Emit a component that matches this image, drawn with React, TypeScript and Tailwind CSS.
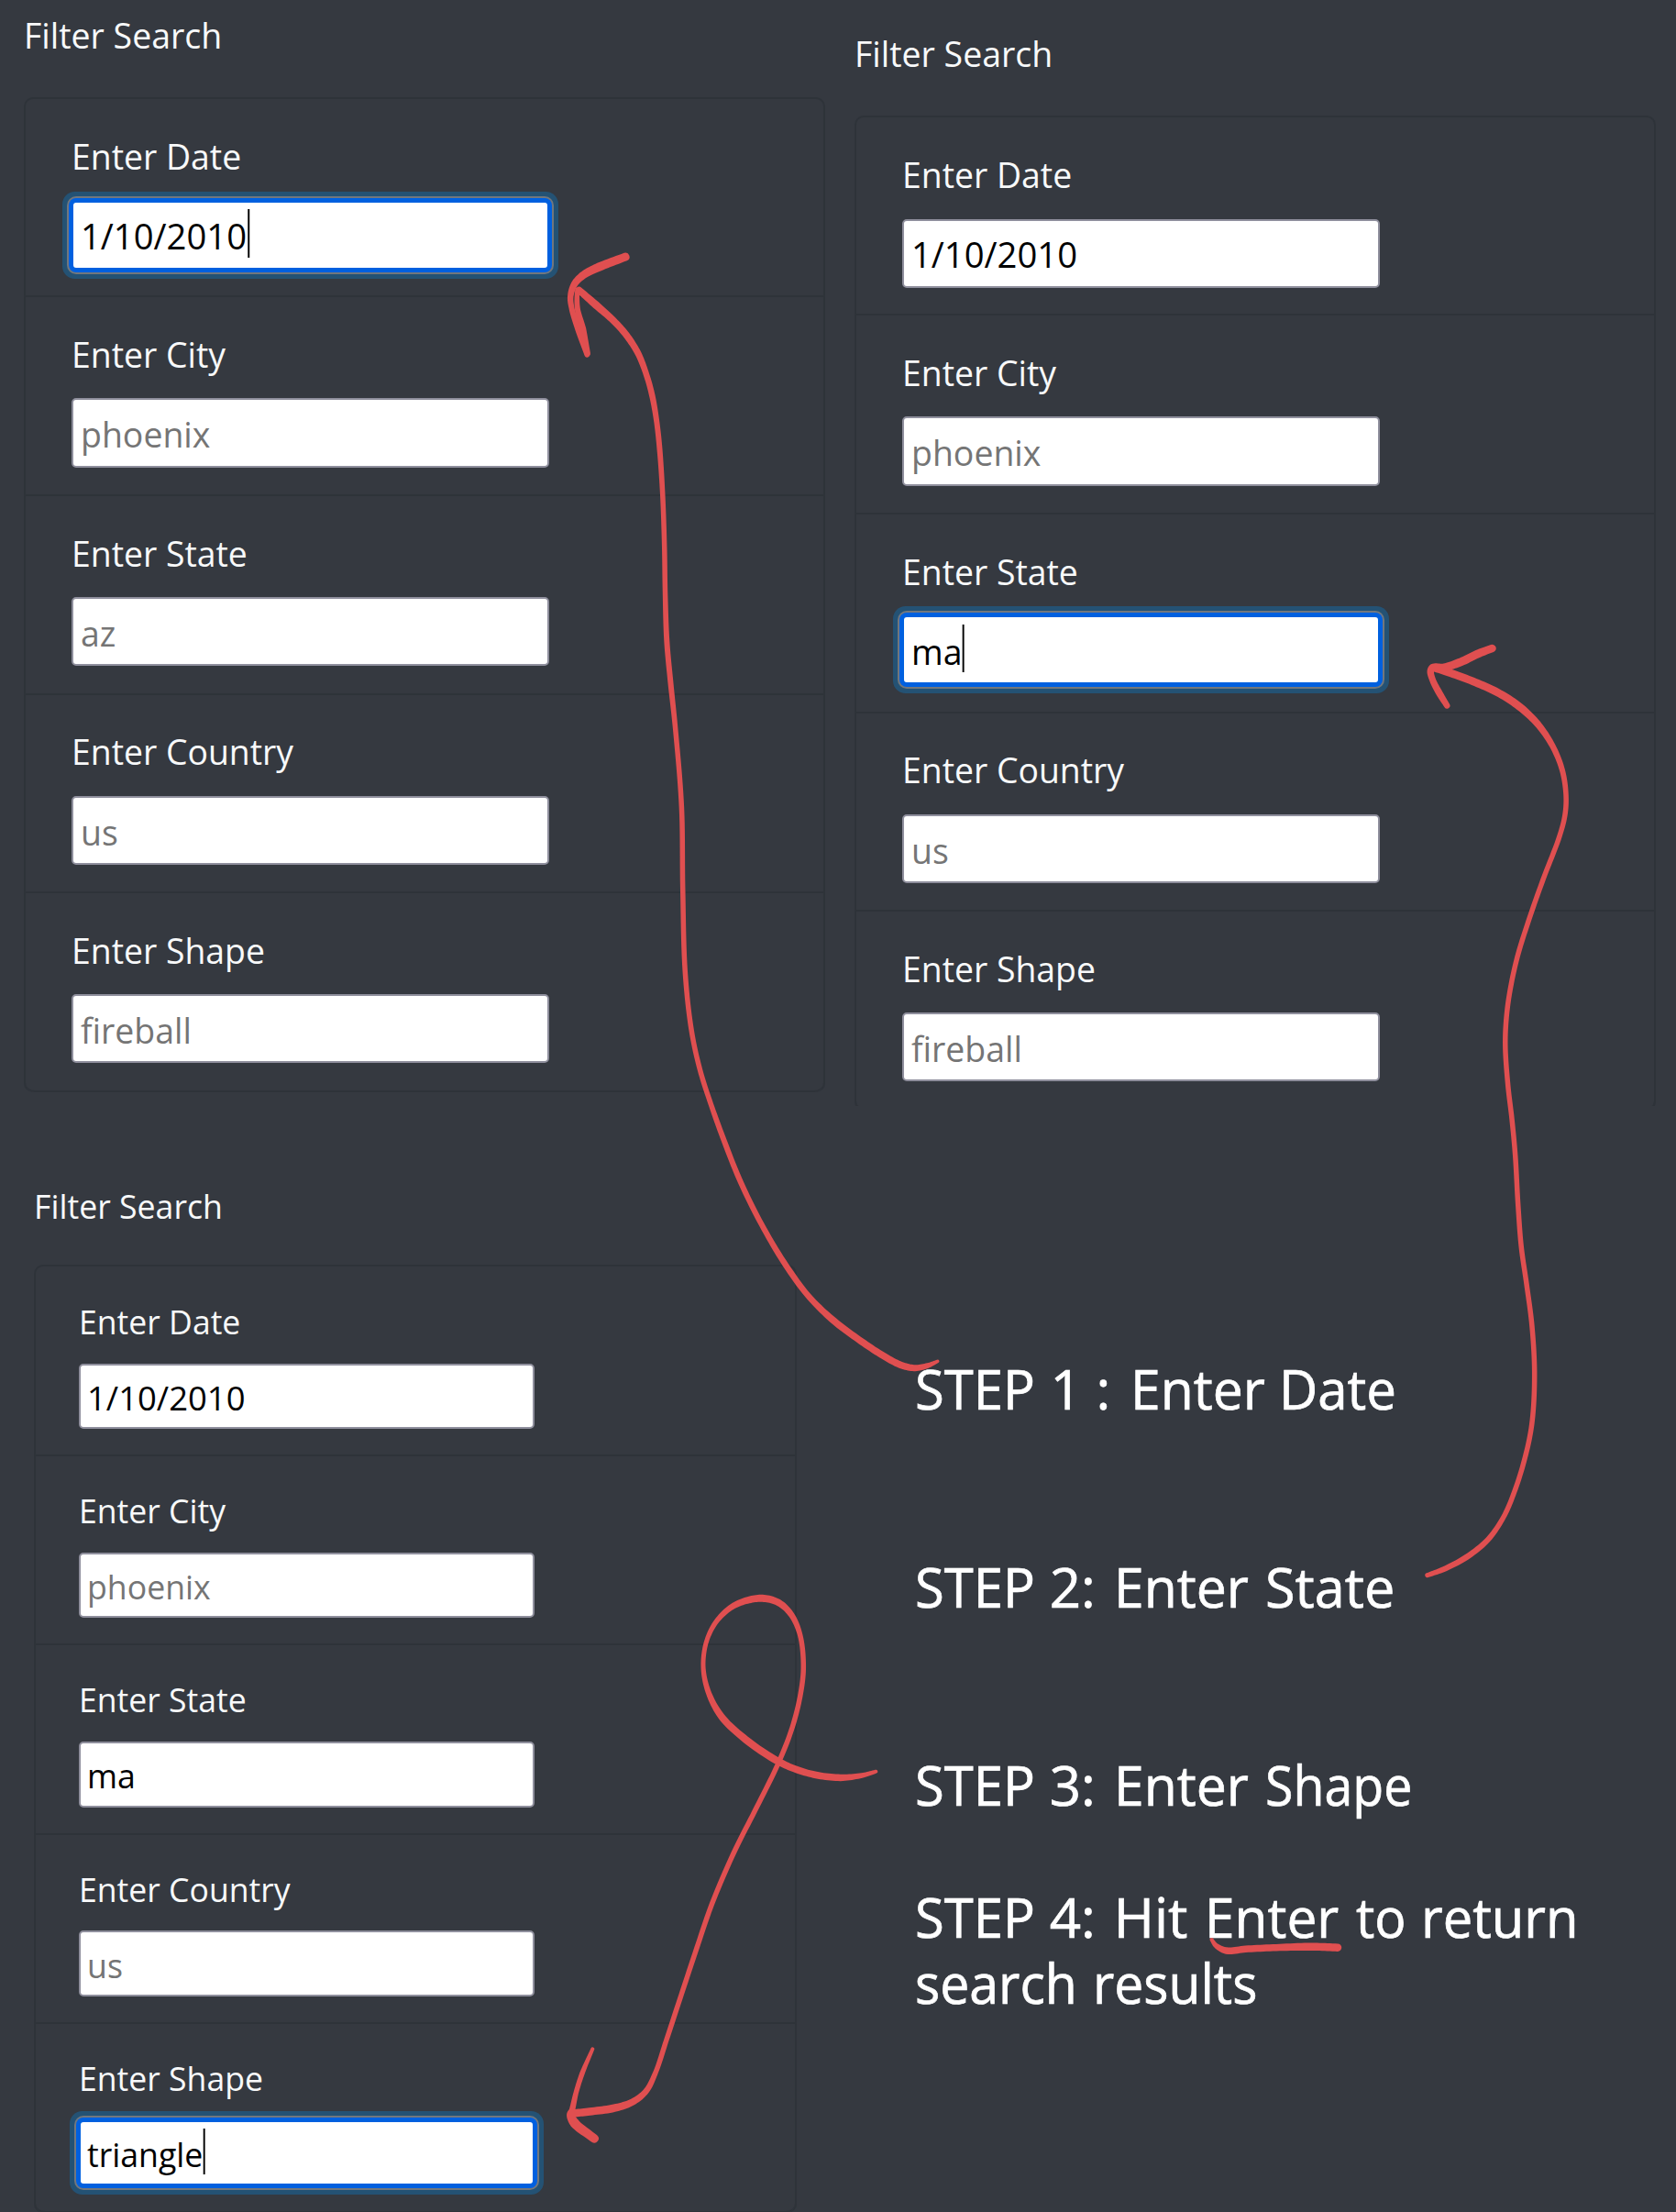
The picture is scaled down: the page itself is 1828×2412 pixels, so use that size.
import React from "react";

type Field = { label: string; hint: string; value?: string; focused?: boolean };

const fields = (values: Record<string, string>, focused: string): Field[] =>
  [
    { label: "Enter Date", hint: "" },
    { label: "Enter City", hint: "phoenix" },
    { label: "Enter State", hint: "az" },
    { label: "Enter Country", hint: "us" },
    { label: "Enter Shape", hint: "fireball" },
  ].map((f) => ({ ...f, value: values[f.label], focused: f.label === focused }));

function FieldBox({ hint, value, focused }: Field) {
  const numeric = !!value && /^\d/.test(value);
  return (
    <div
      className={
        "flex h-[1.925em] w-[13.36em] shrink-0 items-center rounded-[5px] border-2 bg-white pl-[0.195em] pt-[0.07em] " +
        (focused
          ? "border-[#0060df] shadow-[0_0_0_3px_#0060df,0_0_0_5px_#72777d,0_0_0_10px_#245274]"
          : "border-[#8f8f9d]")
      }
    >
      <span
        className={
          "relative inline-block origin-left whitespace-nowrap leading-[1.538em] " +
          (numeric ? "scale-x-[0.98] " : "scale-x-[0.96] ") +
          (value ? "text-black" : "text-[#757575]")
        }
      >
        {value ?? hint}
        {focused && (
          <span
            className={
              "absolute top-[0.02em] h-[1.35em] w-[2px] bg-black " +
              (numeric ? "left-[calc(100%+1px)]" : "left-full")
            }
          />
        )}
      </span>
    </div>
  );
}

function FilterPanel({ className, items }: { className: string; items: Field[] }) {
  return (
    <section className={"shrink-0 text-[#f8f9fa] " + className}>
      <h2 className="leading-[1.538em]">
        <span className="inline-block origin-left scale-x-[0.96]">Filter Search</span>
      </h2>
      <ul className="mt-[0.985em] w-[22.41em] rounded-[10px] border-2 border-b-0 border-[#2e3339]">
        {items.map((f, i) => (
          <li
            key={f.label}
            className={
              "flex h-[5.554em] flex-col border-b-2 border-[#2e3339] pl-[1.282em] " +
              (i === 0 ? "pt-[0.825em] " : "pt-[0.808em] ") +
              (i === items.length - 1 ? "rounded-b-[10px]" : "")
            }
          >
            <label className="mb-[0.475em] h-[1.538em] leading-[1.538em]">
              <span className="inline-block origin-left scale-x-[0.958]">{f.label}</span>
            </label>
            <FieldBox {...f} />
          </li>
        ))}
      </ul>
    </section>
  );
}

/* Each word: text, classes for its advance and horizontal stretch. */
type Word = [string, string];

function Line({ words }: { words: Word[] }) {
  return (
    <p className="flex h-[72px] whitespace-pre leading-[72px]">
      {words.map(([t, c], i) => (
        <span key={i} className={"block shrink-0 origin-left " + c}>
          {t}
        </span>
      ))}
    </p>
  );
}

/* Brush strokes: x, y, thickness triples joined by a smooth spline. */
const STROKES: number[][] = [
  [
    1022.7, 1484.3, 3, 1013.3, 1488.5, 5, 998.3, 1491.7, 6.5, 983.3, 1488.7, 7, 963.3, 1478.3, 7, 936.7, 1460.7, 7,
    910, 1440.7, 7, 883.3, 1415, 6, 860, 1384, 6, 833.3, 1340, 5.5, 808.3, 1290, 5.5, 788.3, 1240, 5.5, 774, 1200, 5,
    763.6, 1167, 5, 754.3, 1124.3, 5, 747.3, 1060, 5, 744.7, 969, 5, 743.4, 880, 5, 736.7, 795, 5,
    731.5, 745, 5.5, 727.3, 699, 5.5, 725.5, 645.7, 5, 724.7, 596, 5, 722.7, 538.5, 5, 719.4, 488.7, 5.5, 716, 458, 5.5,
    711.3, 431.3, 6, 705, 408.4, 6, 696, 385.4, 6.5, 683.3, 365.5, 7, 669, 349.5, 7, 650, 332.5, 8, 631.7, 316.5, 7,
  ],
  [630, 316, 5, 629.3, 324, 5, 630, 337.6, 5.5, 635, 358.6, 8, 640.7, 385.4, 6],
  [
    640.3, 387, 5, 631.5, 362, 6, 623.5, 336, 5.5, 622.3, 323, 6, 626.7, 309.5, 7, 636.7, 299.6, 8, 653.3, 291.2, 9,
    682.3, 280, 8.5,
  ],
  [
    1556.7, 1717.7, 4.5, 1574.4, 1711.2, 5.5, 1599.4, 1698, 6, 1623, 1678.7, 5.5, 1640, 1654, 5, 1650.5, 1630, 5,
    1662.3, 1593.3, 5, 1670.7, 1553.3, 5, 1673.7, 1500, 5, 1671, 1446.7, 5, 1665, 1400, 5, 1659.3, 1360, 5,
    1655.7, 1313.3, 5, 1652.7, 1260, 5, 1649, 1220, 5, 1644.7, 1183.3, 5, 1641.8, 1140, 5,
    1643, 1110, 5, 1647, 1080, 5, 1655, 1043.3, 5, 1668, 1001.7, 5, 1683.3, 958.3, 5, 1701, 911.7, 5,
    1707, 888, 5, 1708, 866.7, 5, 1704, 840, 5.5, 1693.3, 813.3, 6, 1677, 789.3, 7, 1657, 770.3, 8,
    1633.3, 755, 8, 1606.7, 743, 8, 1580, 733.3, 8, 1565, 729.3, 6,
  ],
  [
    1627.5, 707, 8, 1613.3, 712.3, 8.5, 1593.3, 721.8, 8.5, 1575, 727.7, 8, 1562.5, 727.7, 7, 1560.3, 732, 7,
    1562.7, 741.7, 6.5, 1570, 756, 7, 1578.3, 769.5, 6,
  ],
  [
    955.3, 1931.7, 3.5, 940, 1936, 5, 916.7, 1938.4, 7, 890, 1935.5, 7, 866.7, 1928.8, 7, 846.7, 1919.5, 7.5,
    813.3, 1896.8, 7.5, 786.7, 1871.5, 7, 772.3, 1844.2, 5.5, 767, 1816.8, 4.5, 770.7, 1789.4, 4.5, 781.7, 1767.6, 5,
    798.5, 1752, 6, 816.7, 1744.6, 7, 833.3, 1742.9, 7.5, 850, 1748, 7, 863.3, 1761, 6, 872.7, 1783, 5,
    876.3, 1816.8, 5, 873.3, 1846.3, 5, 864, 1884, 5, 848.3, 1924, 5, 826, 1969.3, 5, 800, 2021, 5, 776.7, 2075.6, 5,
    760, 2124, 5, 743.3, 2174.5, 5, 726.7, 2225, 5, 715.5, 2258.7, 5, 705, 2279.8, 6, 690, 2292, 7, 670, 2298.7, 8,
    643.3, 2302.5, 8, 623.3, 2304.6, 8,
  ],
  [
    646.3, 2234.3, 3.5, 635, 2260.8, 5, 628.3, 2281.9, 5, 624, 2300.8, 6, 622.3, 2305.9, 8, 626.7, 2315, 10,
    648.3, 2332, 9,
  ],
  [
    1321.5, 2115, 3.5, 1326.5, 2121.7, 5, 1337.5, 2127, 7, 1358.6, 2125.3, 7, 1391.8, 2123.7, 7, 1430.5, 2122.7, 8,
    1459, 2123.7, 8,
  ],
];

function outline(flat: number[]): string {
  const pts: number[][] = [];
  for (let i = 0; i < flat.length; i += 3) pts.push(flat.slice(i, i + 3));
  const samples: number[][] = [];
  const steps = 10;
  for (let i = 0; i < pts.length - 1; i++) {
    const p0 = pts[Math.max(0, i - 1)];
    const p1 = pts[i];
    const p2 = pts[i + 1];
    const p3 = pts[Math.min(pts.length - 1, i + 2)];
    // Centripetal parameterisation keeps unevenly spaced points free of bumps.
    const gap = (a: number[], b: number[]) => Math.max(1e-3, Math.sqrt(Math.hypot(a[0] - b[0], a[1] - b[1])));
    const d1 = gap(p0, p1);
    const d2 = gap(p1, p2);
    const d3 = gap(p2, p3);
    for (let s = 0; s < steps || (i === pts.length - 2 && s === steps); s++) {
      const t = s / steps;
      samples.push(
        [0, 1, 2].map((k) => {
          if (k === 2) return p1[2] + (p2[2] - p1[2]) * t + 0.5;
          const end = p2[k] - p1[k];
          const m1 =
            i === 0 ? end : end + d2 * ((p1[k] - p0[k]) / d1 - (p2[k] - p0[k]) / (d1 + d2));
          const m2 =
            i === pts.length - 2 ? end : end + d2 * ((p3[k] - p2[k]) / d3 - (p3[k] - p1[k]) / (d2 + d3));
          const t2 = t * t;
          const t3 = t2 * t;
          return (2 * t3 - 3 * t2 + 1) * p1[k] + (t3 - 2 * t2 + t) * m1 + (-2 * t3 + 3 * t2) * p2[k] + (t3 - t2) * m2;
        }),
      );
    }
  }
  const left: string[] = [];
  const right: string[] = [];
  samples.forEach((p, i) => {
    const a = samples[Math.max(0, i - 1)];
    const b = samples[Math.min(samples.length - 1, i + 1)];
    const len = Math.hypot(b[0] - a[0], b[1] - a[1]) || 1;
    const nx = (-(b[1] - a[1]) / len) * (p[2] / 2);
    const ny = ((b[0] - a[0]) / len) * (p[2] / 2);
    left.push((p[0] + nx).toFixed(2) + " " + (p[1] + ny).toFixed(2));
    right.push((p[0] - nx).toFixed(2) + " " + (p[1] - ny).toFixed(2));
  });
  const r0 = samples[0][2] / 2;
  const r1 = samples[samples.length - 1][2] / 2;
  right.reverse();
  return `M${left.join("L")}A${r1} ${r1} 0 0 0 ${right[0]}L${right.join("L")}A${r0} ${r0} 0 0 0 ${left[0]}Z`;
}

export default function App() {
  return (
    <main className="relative flex h-[2412px] w-[1828px] flex-col overflow-hidden bg-[#353940] font-['Open_Sans',sans-serif]">
      <div className="flex h-[1206px] shrink-0 overflow-hidden">
        <FilterPanel
          className="w-[906px] pl-[26px] pt-[7.5px] text-[39px]"
          items={fields({ "Enter Date": "1/10/2010" }, "Enter Date")}
        />
        <FilterPanel
          className="w-[896px] pl-[26px] pt-[27.5px] text-[39px]"
          items={fields({ "Enter Date": "1/10/2010", "Enter State": "ma" }, "Enter State")}
        />
      </div>
      <div className="flex h-[1206px] shrink-0 overflow-hidden">
        <FilterPanel
          className="w-[998px] pl-[36.5px] pt-[79.5px] text-[37.17px]"
          items={fields({ "Enter Date": "1/10/2010", "Enter State": "ma", "Enter Shape": "triangle" }, "Enter Shape")}
        />
        <div className="flex flex-1 flex-col pt-[272px] text-[60px] text-white [-webkit-text-stroke:0.7px_white]">
          <Line
            words={[
              ["STEP", "w-[147.6px] scale-x-[0.967]"],
              ["1", "w-[50px]"],
              [":", "w-[37px]"],
              ["Enter", "w-[162.5px] scale-x-[0.98]"],
              ["Date", "scale-x-[0.97]"],
            ]}
          />
          <div className="mt-36">
            <Line
              words={[
                ["STEP", "w-[146.7px] scale-x-[0.967]"],
                ["2:", "w-[70px]"],
                ["Enter", "w-[165.1px] scale-x-[0.98]"],
                ["State", "scale-x-[0.99]"],
              ]}
            />
          </div>
          <div className="mt-36">
            <Line
              words={[
                ["STEP", "w-[146.7px] scale-x-[0.967]"],
                ["3:", "w-[70px]"],
                ["Enter", "w-[165.1px] scale-x-[0.98]"],
                ["Shape", "scale-x-[0.925]"],
              ]}
            />
          </div>
          <div className="mt-[72px]">
            <Line
              words={[
                ["STEP", "w-[146.7px] scale-x-[0.967]"],
                ["4:", "w-[70px]"],
                ["Hit", "w-[99px]"],
                ["Enter", "w-[165.3px] scale-x-[0.977]"],
                ["to", "w-[71px] scale-x-[0.95]"],
                ["return", "scale-x-[0.965]"],
              ]}
            />
            <Line
              words={[
                ["search", "w-[193.5px] scale-x-[0.952]"],
                ["results", "scale-x-[0.95]"],
              ]}
            />
          </div>
        </div>
      </div>
      <svg
        className="pointer-events-none absolute inset-0"
        width="1828"
        height="2412"
        viewBox="0 0 1828 2412"
        fill="#e04f50"
      >
        {STROKES.map((s, i) => (
          <path key={i} d={outline(s)} />
        ))}
      </svg>
    </main>
  );
}
